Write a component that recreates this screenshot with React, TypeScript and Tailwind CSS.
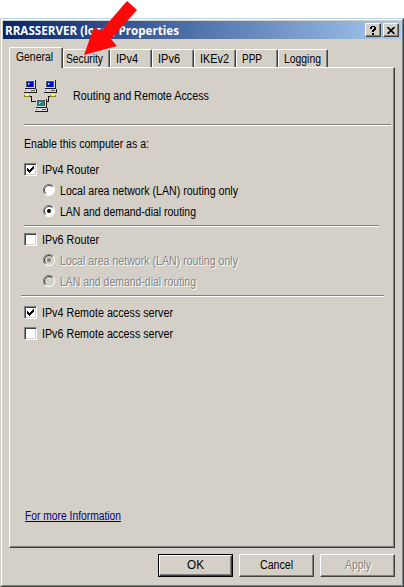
import type { ReactNode } from "react";

const raised =
  "border border-t-white border-l-white border-r-[#404040] border-b-[#404040] shadow-[inset_-1px_-1px_0_#808080]";

function Label({ children, w, disabled = false }: { children: ReactNode; w: number; disabled?: boolean }) {
  return (
    <svg className="block h-[15px] shrink-0 overflow-visible" width={w} height="15">
      {disabled && (
        <text x="1" y="13" textLength={w} lengthAdjust="spacingAndGlyphs" fill="#fff">{children}</text>
      )}
      <text x="0" y="12" textLength={w} lengthAdjust="spacingAndGlyphs" fill={disabled ? "#858585" : "currentColor"}>{children}</text>
    </svg>
  );
}

function Check({ checked = false }: { checked?: boolean }) {
  return (
    <span className="flex h-[13px] w-[13px] shrink-0 items-center justify-center border border-t-[#808080] border-r-white border-b-white border-l-[#808080] bg-white shadow-[inset_1px_1px_0_#404040,inset_-1px_-1px_0_#d4d0c8]">
      {checked && (
        <svg width="7" height="7" viewBox="0 0 7 7" shapeRendering="crispEdges">
          <path d="M0 2h1v1h1v1h1v-1h1v-1h1v-1h1v-1h1v3h-1v1h-1v1h-1v1h-1v1h-1v-1h-1v-1h-1z" />
        </svg>
      )}
    </span>
  );
}

function Radio({ checked = false, disabled = false }: { checked?: boolean; disabled?: boolean }) {
  return (
    <svg className="mt-px block shrink-0 self-start" width="12" height="12" viewBox="0 0 12 12">
      <circle cx="6" cy="6" r="5" fill={disabled ? "#d4d0c8" : "#fff"} />
      <path d="M10 2A5.5 5.5 0 0 0 2 10" fill="none" stroke="#808080" />
      <path d="M9.2 2.8A4.5 4.5 0 0 0 2.8 9.2" fill="none" stroke="#404040" />
      <path d="M10 2A5.5 5.5 0 0 1 2 10" fill="none" stroke="#fff" />
      {checked && <circle cx="6" cy="6" r="2" fill={disabled ? "#808080" : "#000"} />}
    </svg>
  );
}

function Row({ children, top }: { children: ReactNode; top: string }) {
  return <div className={`flex h-[15px] items-center ${top}`}>{children}</div>;
}

function Computer({ x, y, color }: { x: number; y: number; color: string }) {
  return (
    <g transform={`translate(${x} ${y})`}>
      <path d="M1 0h11v9h1v4h-13v-4h1z" fill="#1c1c1c" />
      <path d="M1 0h10v8h-10zM0 9h12v3h-12z" fill="#d8d8d8" />
      <path d="M2 1h8v6h-8z" fill="#555" />
      <path d="M3 2h6v5h-6z" fill={color} />
      <path d="M4 3h2v1h-1v1h-1z" fill="#8ad4ff" />
      <path d="M7 10h4v1h-4z" fill="#555" />
      <path d="M1 10h1v1h-1z" fill="#3a3" />
    </g>
  );
}

function NetworkIcon() {
  return (
    <svg className="block shrink-0" width="34" height="32" viewBox="0 0 34 32" shapeRendering="crispEdges">
      <path d="M6 16.5h1.500v5h4M26 16.500h-1.500v5h-2" fill="none" stroke="#111" />
      <path d="M0 15h6v2h-6zM26 15h6v2h-6z" fill="#8d8610" />
      <path d="M1 15h4v1h-4zM27 15h4v1h-4zM2 13h2v2h-2zM28 13h2v2h-2z" fill="#ffff40" />
      <Computer x={0} y={0} color="#0008d0" />
      <Computer x={20} y={0} color="#0008d0" />
      <Computer x={11} y={19} color="#168b80" />
    </svg>
  );
}

function Tab({ label, w, cls }: { label: string; w: number; cls: string }) {
  return (
    <div className={`flex h-[18px] shrink-0 rounded-t-[2px] border border-b-0 border-t-white border-l-white border-r-[#404040] pt-px shadow-[inset_-1px_0_0_#808080] ${cls}`}>
      <Label w={w}>{label}</Label>
    </div>
  );
}

function Button({ label, w, kind = "normal" }: { label: string; w: number; kind?: "normal" | "default" | "disabled" }) {
  return (
    <button className={`flex h-[23px] w-[75px] shrink-0 ${kind === "default" ? "border border-black" : ""}`}>
      <span className={`flex h-full w-full items-center justify-center pb-[2px] ${raised}`}>
        <Label w={w} disabled={kind === "disabled"}>{label}</Label>
      </span>
    </button>
  );
}

function Rule({ cls }: { cls: string }) {
  return <div className={`h-[2px] border-t border-b border-t-[#808080] border-b-white ${cls}`} />;
}

export default function App() {
  return (
    <main className="relative h-[587px] w-[404px] overflow-hidden bg-white pt-[18px] text-[12px] text-black [font-family:'Liberation_Sans',Arial,sans-serif]">
      <section className="h-[569px] border border-t-[#b9d5ed] border-r-[#404040] border-b-[#404040] border-l-[#d4d0c8] bg-[#d4d0c8]">
        <div className="h-full border border-t-white border-r-[#808080] border-b-[#808080] border-l-white pt-px">
          <header className="mr-px ml-px flex h-[18px] items-center bg-linear-to-r from-[#0a246a] to-[#a6caf0] pr-[2px] pl-[2px] text-white">
            <div className="flex-1 font-bold [font-family:'Open_Sans','Noto_Sans',sans-serif]">
              <Label w={174}>RRASSERVER (local) Properties</Label>
            </div>
            <button className={`mr-[2px] flex h-[14px] w-[16px] items-center justify-center bg-[#d4d0c8] text-black ${raised}`}>
              <svg width="8" height="9" viewBox="0 0 8 9" shapeRendering="crispEdges"><path d="M2 0h4v1h1v3h-1v1h-1v1h-2v-2h1v-1h1v-2h-2v2h-2v-2h1zM3 7h2v2h-2z" /></svg>
            </button>
            <button className={`flex h-[14px] w-[16px] items-center justify-center bg-[#d4d0c8] text-black ${raised}`}>
              <svg width="8" height="7" viewBox="0 0 8 7"><path d="M.5 0l7 7M7.5 0l-7 7" stroke="currentColor" strokeWidth="1.6" /></svg>
            </button>
          </header>
          <div className="ml-[7px] flex h-[28px] items-end">
            <div className="z-10 -mb-px flex h-[21px] w-[54px] shrink-0 rounded-t-[2px] border border-b-0 border-t-white border-r-[#404040] border-l-white bg-[#d4d0c8] pt-px pl-[6px] shadow-[inset_-1px_0_0_#808080]">
              <Label w={37}>General</Label>
            </div>
            <Tab label="Security" w={37} cls="w-[47px] pl-[2px]" />
            <Tab label="IPv4" w={22} cls="w-[42px] pl-[5px]" />
            <Tab label="IPv6" w={22} cls="w-[42px] pl-[5px]" />
            <Tab label="IKEv2" w={29} cls="w-[42px] pl-[5px]" />
            <Tab label="PPP" w={20} cls="w-[42px] pl-[5px]" />
            <Tab label="Logging" w={37} cls="w-[50px] pl-[5px]" />
          </div>
          <div className={`ml-[7px] h-[481px] w-[386px] pl-[14px] ${raised}`}>
            <div className="flex h-[56px] items-start pt-[12px]">
              <NetworkIcon />
              <div className="mt-[8px] ml-[15px]"><Label w={136}>Routing and Remote Access</Label></div>
            </div>
            <Rule cls="w-[367px]" />
            <Row top="mt-[10px]"><Label w={125}>Enable this computer as a:</Label></Row>
            <Row top="mt-[11px]"><Check checked /><span className="w-[5px]" /><Label w={57}>IPv4 Router</Label></Row>
            <Row top="mt-[6px] pl-[19px]"><Radio /><span className="w-[5px]" /><Label w={178}>Local area network (LAN) routing only</Label></Row>
            <Row top="mt-[6px] pl-[19px]"><Radio checked /><span className="w-[5px]" /><Label w={136}>LAN and demand-dial routing</Label></Row>
            <Rule cls="mt-[6px] w-[355px]" />
            <Row top="mt-[5px]"><Check /><span className="w-[5px]" /><Label w={57}>IPv6 Router</Label></Row>
            <Row top="mt-[6px] pl-[19px]"><Radio checked disabled /><span className="w-[5px]" /><Label w={178} disabled>Local area network (LAN) routing only</Label></Row>
            <Row top="mt-[6px] pl-[19px]"><Radio disabled /><span className="w-[5px]" /><Label w={136} disabled>LAN and demand-dial routing</Label></Row>
            <Rule cls="mt-[6px] -ml-[3px] w-[363px]" />
            <Row top="mt-[8px]"><Check checked /><span className="w-[5px]" /><Label w={131}>IPv4 Remote access server</Label></Row>
            <Row top="mt-[6px]"><Check /><span className="w-[5px]" /><Label w={131}>IPv6 Remote access server</Label></Row>
            <a className="mt-[167px] ml-px block h-[14px] w-[96px] border-b border-[#000080] text-[#000080]"><Label w={96}>For more Information</Label></a>
          </div>
          <footer className="mt-[6px] ml-[156px] flex gap-[6px]">
            <Button label="OK" w={17} kind="default" />
            <Button label="Cancel" w={33} />
            <Button label="Apply" w={26} kind="disabled" />
          </footer>
        </div>
      </section>
      <svg className="absolute top-0 left-[80px]" width="60" height="58" viewBox="0 0 60 58">
        <path d="M4 55L14 27L21 31L47 1L57 10L31 39L37 46Z" fill="#fb0808" />
      </svg>
    </main>
  );
}
